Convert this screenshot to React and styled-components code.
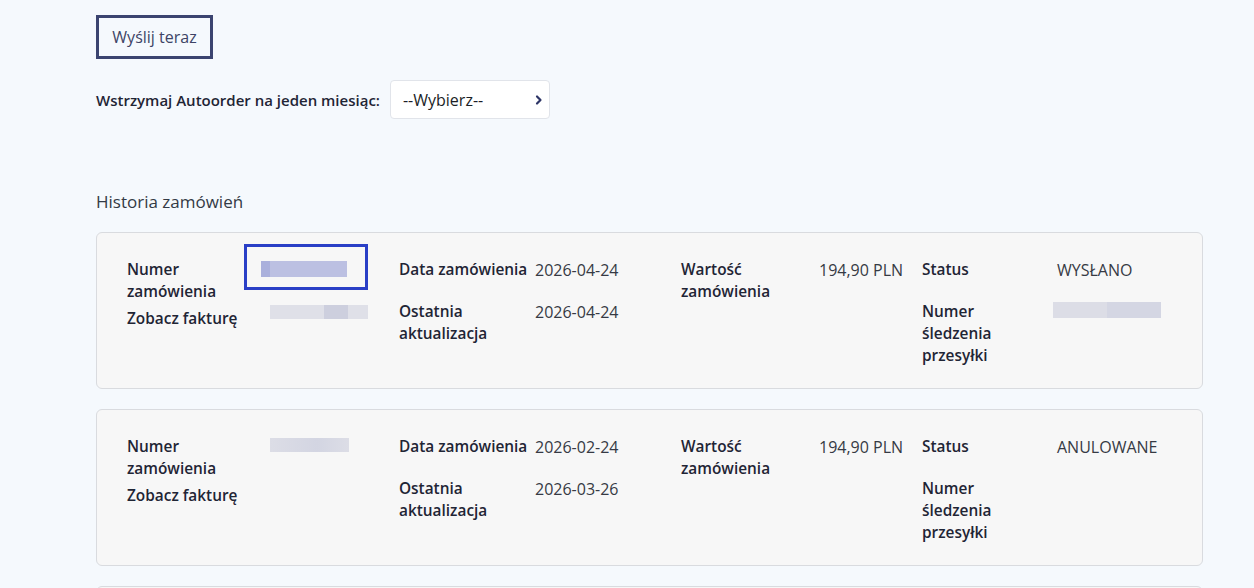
import styled, { createGlobalStyle } from "styled-components";

const GlobalStyle = createGlobalStyle`
  html, body {
    margin: 0;
    padding: 0;
    background: #f5f9fd;
    font-family: "Open Sans", "Noto Sans", sans-serif;
    color: #2b2f3a;
  }
`;

const Page = styled.div`
  padding: 15px 51px 0 96px;
  box-sizing: border-box;
  width: 1254px;
  height: 588px;
  overflow: hidden;
`;

const SendButton = styled.button`
  display: block;
  height: 44px;
  width: 117px;
  box-sizing: border-box;
  border: 3px solid #3b4470;
  background: transparent;
  font-family: inherit;
  font-size: 16px;
  color: #3d4466;
  padding: 0;
  cursor: pointer;
`;

const PauseRow = styled.div`
  display: flex;
  align-items: center;
  gap: 10px;
  margin-top: 21px;
  font-size: 15px;
  font-weight: 600;
  color: #1f2535;
`;

const Select = styled.div`
  width: 160px;
  height: 39px;
  box-sizing: border-box;
  background: #fff;
  border: 1px solid #e1e4ea;
  border-radius: 4px;
  display: flex;
  align-items: center;
  justify-content: space-between;
  padding: 0 4px 0 12px;
  font-size: 16px;
  font-weight: 400;
  color: #1b1e26;
`;

const SectionTitle = styled.h2`
  margin: 71px 0 18px;
  font-size: 17px;
  font-weight: 400;
  line-height: 24px;
  color: #333a45;
`;

const Card = styled.div`
  display: grid;
  grid-template-columns: 272px 282px 241px 1fr;
  background: #f7f7f7;
  border: 1px solid #d9dbdf;
  border-radius: 6px;
  padding: 26px 30px 21px;
  margin-bottom: 20px;
  min-height: 157px;
  box-sizing: border-box;
`;

const Column = styled.div`
  display: flex;
  flex-direction: column;
`;

const Pair = styled.div`
  display: grid;
  grid-template-columns: ${(p) => p.$label}px 1fr;
  min-height: 37px;
  margin-bottom: 5px;
  line-height: 22px;
  &:last-child {
    margin-bottom: 0;
  }
`;

const Label = styled.div`
  font-size: 15.4px;
  font-weight: 600;
  color: #1f2535;
  padding-right: 6px;
`;

const Value = styled.div`
  font-size: 16px;
  color: #363a44;
  position: relative;
`;

const Blur = styled.div`
  width: ${(p) => p.$w}px;
  height: ${(p) => p.$h || 15}px;
  margin-top: ${(p) => p.$top || 4}px;
  margin-left: ${(p) => p.$left || 0}px;
  background: ${(p) => p.$bg || "linear-gradient(90deg, #dcdde6 0%, #d3d5e2 60%, #dcdde6 100%)"};
  filter: blur(0.6px);
`;

const Highlight = styled.div`
  position: absolute;
  left: -26px;
  top: -15px;
  width: 124px;
  height: 46px;
  box-sizing: border-box;
  border: 3px solid #2a3fc6;
`;

const Chevron = () => (
  <svg width="12" height="12" viewBox="0 0 12 12">
    <path d="M4 2.5 L7.5 6 L4 9.5" fill="none" stroke="#2d3566" strokeWidth="2.2" strokeLinecap="round" strokeLinejoin="round" />
  </svg>
);

const orders = [
  {
    highlight: true,
    date: "2026-04-24",
    updated: "2026-04-24",
    value: "194,90 PLN",
    status: "WYSŁANO",
    invoice: true,
    tracking: true,
  },
  {
    highlight: false,
    date: "2026-02-24",
    updated: "2026-03-26",
    value: "194,90 PLN",
    status: "ANULOWANE",
    invoice: false,
    tracking: false,
  },
];

const OrderCard = ({ order }) => (
  <Card>
    <Column>
      <Pair $label={143} style={{ minHeight: 44 }}>
        <Label>Numer zamówienia</Label>
        <Value>
          {order.highlight ? (
            <>
              <Highlight />
              <Blur $w={86} $top={2} $left={-9} $h={16} $bg="linear-gradient(90deg, #aab0dc 0 10%, #bcc0e2 10% 100%)" />
            </>
          ) : (
            <Blur $w={79} $top={2} $h={14} />
          )}
        </Value>
      </Pair>
      <Pair $label={143}>
        <Label>Zobacz fakturę</Label>
        <Value>
          {order.invoice && (
            <Blur $w={98} $top={-3} $h={14} $bg="linear-gradient(90deg, #dfe0e8 0 55%, #cdcfde 55% 80%, #dfe0e8 80%)" />
          )}
        </Value>
      </Pair>
    </Column>
    <Column>
      <Pair $label={136}>
        <Label>Data zamówienia</Label>
        <Value>{order.date}</Value>
      </Pair>
      <Pair $label={136}>
        <Label>Ostatnia aktualizacja</Label>
        <Value>{order.updated}</Value>
      </Pair>
    </Column>
    <Column>
      <Pair $label={138}>
        <Label>Wartość zamówienia</Label>
        <Value>{order.value}</Value>
      </Pair>
    </Column>
    <Column>
      <Pair $label={135}>
        <Label>Status</Label>
        <Value>{order.status}</Value>
      </Pair>
      <Pair $label={135}>
        <Label>
          Numer
          <br />
          śledzenia
          <br />
          przesyłki
        </Label>
        <Value>
          {order.tracking && (
            <Blur $w={108} $top={1} $left={-4} $h={16} $bg="linear-gradient(90deg, #dcdde6 0 50%, #d4d6e3 50%)" />
          )}
        </Value>
      </Pair>
    </Column>
  </Card>
);

const App = () => (
  <>
    <GlobalStyle />
    <Page>
      <SendButton>Wyślij teraz</SendButton>
      <PauseRow>
        <span>Wstrzymaj Autoorder na jeden miesiąc:</span>
        <Select>
          <span>--Wybierz--</span>
          <Chevron />
        </Select>
      </PauseRow>
      <SectionTitle>Historia zamówień</SectionTitle>
      {orders.map((o, i) => (
        <OrderCard key={i} order={o} />
      ))}
      <Card />
    </Page>
  </>
);

export default App;
